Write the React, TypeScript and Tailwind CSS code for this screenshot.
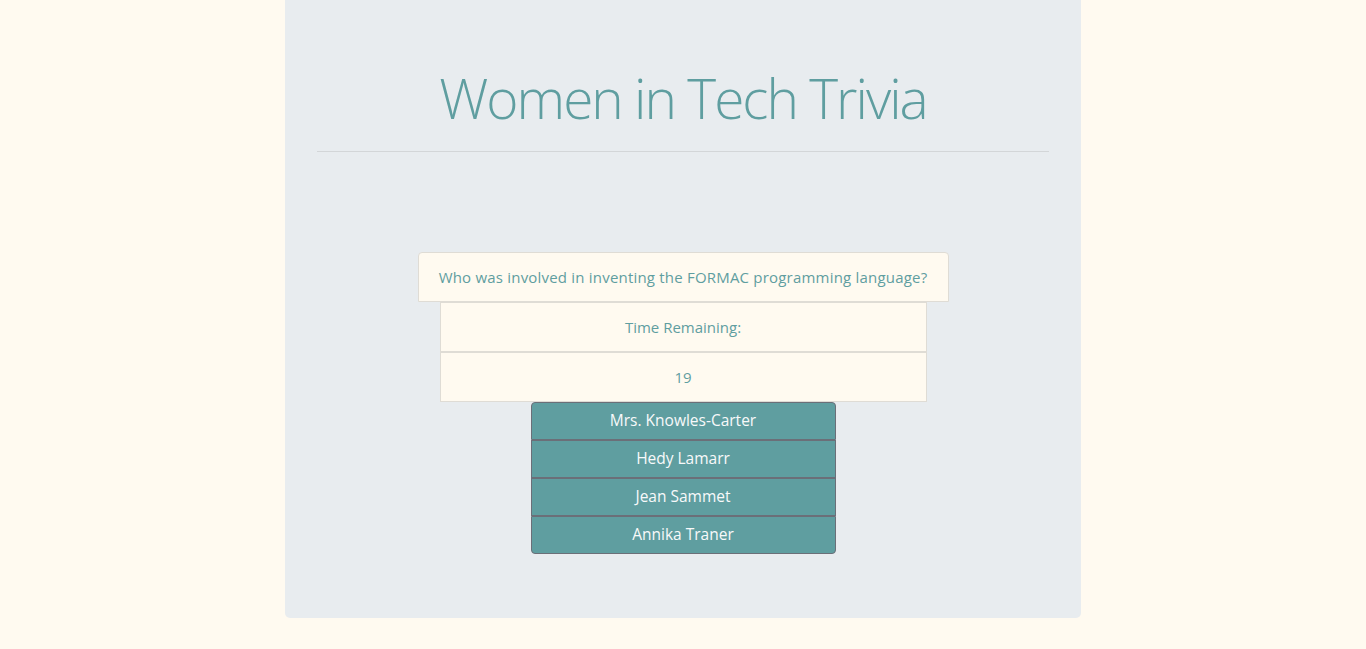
import React from 'react';

const answers = ['Mrs. Knowles-Carter', 'Hedy Lamarr', 'Jean Sammet', 'Annika Traner'];

const App = () => {
  return (
    <div className="min-h-[649px] bg-[#fffaf0] font-['Open_Sans',sans-serif] text-[#5f9ea0]">
      <div className="mx-auto w-[796px] rounded-b-[5px] bg-[#e8ecef] px-8 pt-[64px] pb-[64px]">
        <h1 className="text-center text-[55px] font-light leading-[67px] tracking-[-2px]">Women in Tech Trivia</h1>
        <hr className="mt-[20px] border-t border-[#d3d6d8]" />

        <div className="mt-[100px] flex flex-col items-center">
          <div className="flex h-[50px] w-[531px] items-center justify-center rounded-t-[4px] border border-[#dfdcd5] bg-[#fffaf0] text-[15px] tracking-[0.2px]">
            Who was involved in inventing the FORMAC programming language?
          </div>
          <div className="flex h-[50px] w-[487px] items-center justify-center border border-[#dfdcd5] bg-[#fffaf0] text-[15px]">
            Time Remaining:
          </div>
          <div className="flex h-[50px] w-[487px] items-center justify-center border border-[#dfdcd5] bg-[#fffaf0] text-[15px]">
            19
          </div>
          <div className="flex w-[305px] flex-col">
            {answers.map((a, i) => (
              <button
                key={a}
                className={`h-[38px] border border-[#6b6f78] bg-[#5f9ea0] text-[15.5px] text-[#f8f9fa] ${i === 0 ? 'rounded-t-[4px]' : ''} ${i === answers.length - 1 ? 'rounded-b-[4px]' : ''}`}
              >
                {a}
              </button>
            ))}
          </div>
        </div>
      </div>
    </div>
  );
};

export default App;
